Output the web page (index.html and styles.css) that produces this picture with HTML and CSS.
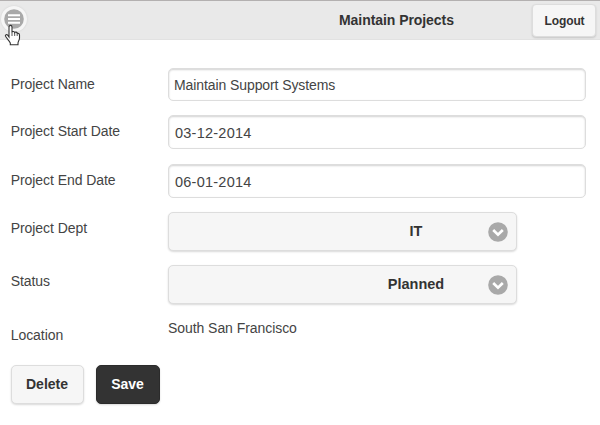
FILE: index.html
```html
<!DOCTYPE html>
<html lang="en">
<head>
<meta charset="utf-8">
<title>Maintain Projects</title>
<link rel="stylesheet" href="styles.css">
</head>
<body>
<header class="header">
  <button class="menu" aria-label="Menu"><svg width="20" height="20" viewBox="0 0 20 20"><circle cx="10" cy="10" r="9.8" fill="#a9a9a9"/><path d="M4 6.2h12M4 10h12M4 13.8h12" stroke="#fff" stroke-width="2"/></svg></button>
  <h1 class="title"><span>Maintain Projects</span></h1>
  <button class="btn logout"><span>Logout</span></button>
</header>
<svg class="cursor" width="17" height="22" viewBox="0 0 17 22"><path d="M5 13V3.2c0-2.4 3-2.4 3 0v5c.3-1.1 2.5-1 2.7.4.5-.9 2.400-.6 2.500.8.9-.5 2.300.1 2.300 1.500v3.300c0 2-1.500 3-1.500 4.800v1.800H6.300V19C5.400 17 3 14.700 1.500 12.300c-.6-1.500 1.200-2.300 2.200-1.100z" fill="#fff" stroke="#333" stroke-width="1.100"/><path d="M8 8v4M10.700 9v3M13.200 10v2" stroke="#444" stroke-width=".9"/></svg>
<main class="form">
  <div class="row name"><label><span>Project Name</span></label><div class="input"><span>Maintain Support Systems</span></div></div>
  <div class="row start"><label><span>Project Start Date</span></label><div class="input date"><span>03-12-2014</span></div></div>
  <div class="row end"><label><span>Project End Date</span></label><div class="input date"><span>06-01-2014</span></div></div>
  <div class="row dept"><label><span>Project Dept</span></label><div class="btn select"><span>IT</span><svg width="20" height="20" viewBox="0 0 20 20"><circle cx="10" cy="10" r="9.800" fill="#a9a9a9"/><path d="M5.200 8l4.800 4.600L14.800 8" fill="none" stroke="#fff" stroke-width="2.700"/></svg></div></div>
  <div class="row status"><label><span>Status</span></label><div class="btn select"><span>Planned</span><svg width="20" height="20" viewBox="0 0 20 20"><circle cx="10" cy="10" r="9.800" fill="#a9a9a9"/><path d="M5.200 8l4.800 4.600L14.800 8" fill="none" stroke="#fff" stroke-width="2.700"/></svg></div></div>
  <div class="row location"><label><span>Location</span></label><div class="value"><span>South San Francisco</span></div></div>
  <div class="actions"><button class="btn delete"><span>Delete</span></button><button class="btn save"><span>Save</span></button></div>
</main>
</body>
</html>
```
FILE: styles.css
```css
* { box-sizing: border-box; }
body { margin: 0; height: 425px; overflow: hidden; background: #fff; color: #444; font: 14px/18px "Liberation Sans", Arial, sans-serif; letter-spacing: -0.06px; }
.header { height: 40px; display: flex; align-items: flex-start; background: #e9e9e9; border-top: 1px solid #b3b0b0; border-bottom: 1px solid #e2e2e2; }
.menu { width: 26px; height: 26px; margin: 5px 0 0 1px; padding: 3px; border: 0; border-radius: 50%; background: #f6f6f6; box-shadow: 0 0 2px #ccc; }
.menu svg, .select svg { display: block; }
.title { margin: 10px 0 0 312px; width: 193px; font-size: 14px; line-height: 18px; color: #333; }
.btn { font-family: inherit; font-weight: bold; color: #333; background: #f6f6f6; border: 1px solid #ddd; border-radius: 5px; box-shadow: 0 1px 2px rgba(0,0,0,.15); padding: 0; }
.logout { width: 64px; height: 33px; margin-top: 3px; border-radius: 4px; font-size: 12px; letter-spacing: -0.1px; padding: 0 0 0 1px; }
.cursor { position: absolute; left: 4px; top: 24px; }
.form { padding: 28px 0 0 10px; }
.row { display: grid; grid-template-columns: 158px 1fr; align-items: start; }
.name { height: 47px; }
.start { height: 49px; }
.end { height: 48px; }
.dept, .status { height: 53px; }
.location { height: 47px; }
.row label { padding: 7px 0 0 .7px; }
.location label { padding-top: 8px; }
.input { width: 418px; height: 33px; padding: 8px 5px; border: 1px solid #ddd; border-radius: 5px; box-shadow: inset 0 1px 2px rgba(0,0,0,.18); line-height: 17px; letter-spacing: -0.09px; }
.date { height: 34px; padding-top: 9px; padding-left: 6px; font-size: 14.5px; letter-spacing: .24px; }
.select { width: 349px; height: 39px; display: flex; align-items: center; justify-content: flex-end; padding-right: 8px; font-size: 14.5px; letter-spacing: 0; }
.select span { width: 144px; text-align: center; padding-bottom: 2px; }
.value { padding-top: 1px; }
.actions { display: flex; gap: 12px; padding-left: .5px; }
.delete, .save { width: 73px; height: 39px; font-size: 14px; padding-bottom: 1px; }
.save { width: 64px; color: #fff; background: #333; border-color: #2b2b2b; }
```
